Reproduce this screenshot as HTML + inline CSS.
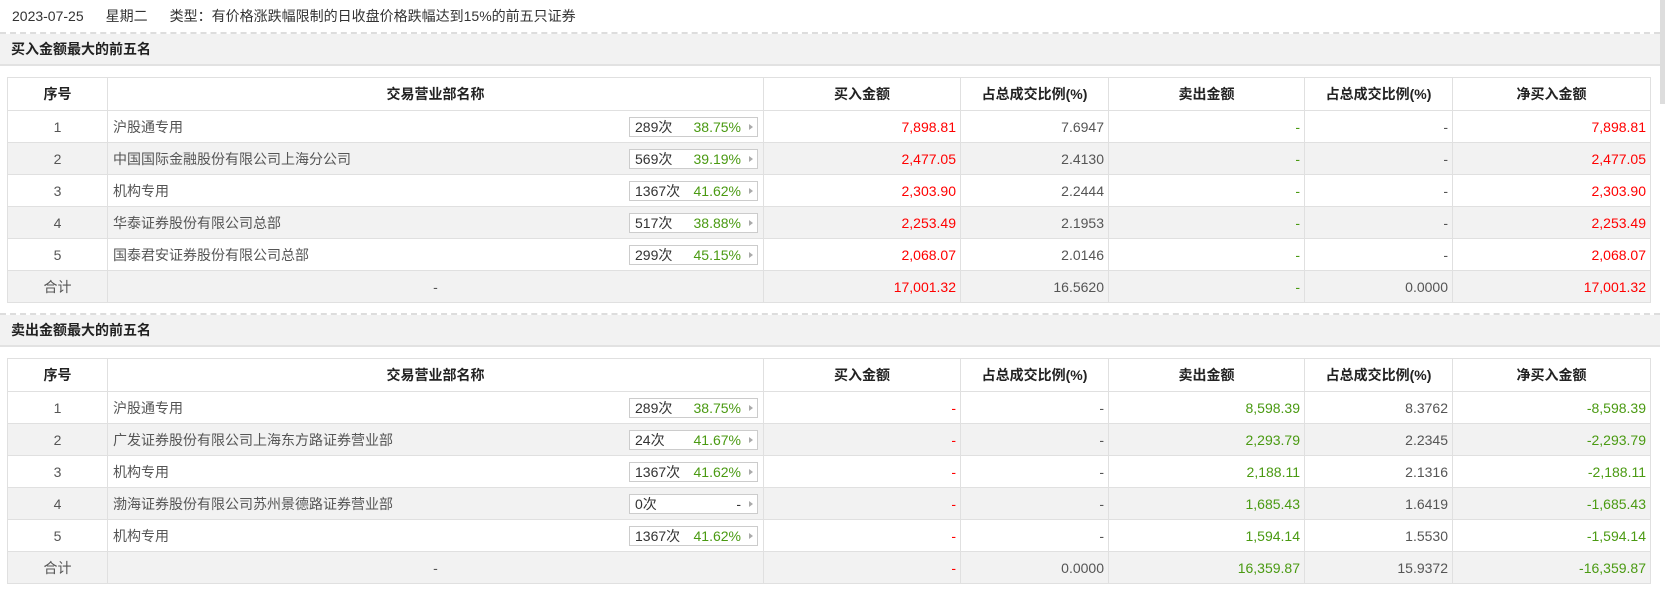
<!DOCTYPE html>
<html><head><meta charset="utf-8">
<style>
*{margin:0;padding:0;box-sizing:border-box}
body{width:1665px;height:594px;background:#fff;font-family:"Liberation Sans","Noto Sans CJK SC",sans-serif;font-size:14px;color:#333;overflow:hidden;position:relative}
.top{position:absolute;left:12px;top:7px;height:18px;line-height:18px;color:#333}
.top span{margin-right:22px}
.dash{position:absolute;left:0;width:1660px;border-top:2px dashed #ddd}
.sh{position:absolute;left:0;width:1660px;background:#f2f2f2;border-bottom:2px solid #e2e2e2;font-weight:bold;padding-left:11px;color:#222}
table{position:absolute;left:7px;border-collapse:collapse;table-layout:fixed;width:1643px}
td,th{border:1px solid #e0e0e0;height:32px;padding:0 5px;white-space:nowrap}
th{height:33px;font-weight:bold;color:#222;text-align:center;background:#fff}
tr.g td{background:#f2f2f2}
.c{text-align:center;color:#555}
.r{text-align:right;color:#555;padding-right:4px}
.red{color:#f00}
.grn{color:#4a9a12}
.nm{position:relative;color:#555}
.box{position:absolute;right:5px;top:6px;width:129px;height:20px;border:1px solid #ccc;background:#fff;line-height:18px;font-size:14px;color:#333;padding-left:5px}
.box b{font-weight:normal;position:absolute;right:16px;top:0;color:#4a9a12}
.box i{position:absolute;right:4px;top:6px;width:0;height:0;border-left:4px solid #aaa;border-top:3.5px solid transparent;border-bottom:3.5px solid transparent}
.sb{position:absolute;right:0;top:0;width:5px;height:104px;background:#ddd}
</style></head><body>
<div class="top"><span>2023-07-25</span><span>星期二</span>类型：有价格涨跌幅限制的日收盘价格跌幅达到15%的前五只证券</div>
<div class="dash" style="top:32px"></div>
<div class="sh" style="top:34px;height:32px;line-height:30px">买入金额最大的前五名</div>
<table style="top:77px">
<colgroup><col style="width:100px"><col style="width:656px"><col style="width:197px"><col style="width:148px"><col style="width:196px"><col style="width:148px"><col style="width:198px"></colgroup>
<tr><th>序号</th><th>交易营业部名称</th><th>买入金额</th><th>占总成交比例(%)</th><th>卖出金额</th><th>占总成交比例(%)</th><th>净买入金额</th></tr>
<tr><td class="c">1</td><td class="nm">沪股通专用<div class="box">289次<b>38.75%</b><i></i></div></td><td class="r red">7,898.81</td><td class="r">7.6947</td><td class="r grn">-</td><td class="r">-</td><td class="r red">7,898.81</td></tr>
<tr class="g"><td class="c">2</td><td class="nm">中国国际金融股份有限公司上海分公司<div class="box">569次<b>39.19%</b><i></i></div></td><td class="r red">2,477.05</td><td class="r">2.4130</td><td class="r grn">-</td><td class="r">-</td><td class="r red">2,477.05</td></tr>
<tr><td class="c">3</td><td class="nm">机构专用<div class="box">1367次<b>41.62%</b><i></i></div></td><td class="r red">2,303.90</td><td class="r">2.2444</td><td class="r grn">-</td><td class="r">-</td><td class="r red">2,303.90</td></tr>
<tr class="g"><td class="c">4</td><td class="nm">华泰证券股份有限公司总部<div class="box">517次<b>38.88%</b><i></i></div></td><td class="r red">2,253.49</td><td class="r">2.1953</td><td class="r grn">-</td><td class="r">-</td><td class="r red">2,253.49</td></tr>
<tr><td class="c">5</td><td class="nm">国泰君安证券股份有限公司总部<div class="box">299次<b>45.15%</b><i></i></div></td><td class="r red">2,068.07</td><td class="r">2.0146</td><td class="r grn">-</td><td class="r">-</td><td class="r red">2,068.07</td></tr>
<tr class="g"><td class="c">合计</td><td class="c">-</td><td class="r red">17,001.32</td><td class="r">16.5620</td><td class="r grn">-</td><td class="r">0.0000</td><td class="r red">17,001.32</td></tr>
</table>
<div class="dash" style="top:313px"></div>
<div class="sh" style="top:315px;height:32px;line-height:30px">卖出金额最大的前五名</div>
<table style="top:358px">
<colgroup><col style="width:100px"><col style="width:656px"><col style="width:197px"><col style="width:148px"><col style="width:196px"><col style="width:148px"><col style="width:198px"></colgroup>
<tr><th>序号</th><th>交易营业部名称</th><th>买入金额</th><th>占总成交比例(%)</th><th>卖出金额</th><th>占总成交比例(%)</th><th>净买入金额</th></tr>
<tr><td class="c">1</td><td class="nm">沪股通专用<div class="box">289次<b>38.75%</b><i></i></div></td><td class="r red">-</td><td class="r">-</td><td class="r grn">8,598.39</td><td class="r">8.3762</td><td class="r grn">-8,598.39</td></tr>
<tr class="g"><td class="c">2</td><td class="nm">广发证券股份有限公司上海东方路证券营业部<div class="box">24次<b>41.67%</b><i></i></div></td><td class="r red">-</td><td class="r">-</td><td class="r grn">2,293.79</td><td class="r">2.2345</td><td class="r grn">-2,293.79</td></tr>
<tr><td class="c">3</td><td class="nm">机构专用<div class="box">1367次<b>41.62%</b><i></i></div></td><td class="r red">-</td><td class="r">-</td><td class="r grn">2,188.11</td><td class="r">2.1316</td><td class="r grn">-2,188.11</td></tr>
<tr class="g"><td class="c">4</td><td class="nm">渤海证券股份有限公司苏州景德路证券营业部<div class="box">0次<b style="color:#333">-</b><i></i></div></td><td class="r red">-</td><td class="r">-</td><td class="r grn">1,685.43</td><td class="r">1.6419</td><td class="r grn">-1,685.43</td></tr>
<tr><td class="c">5</td><td class="nm">机构专用<div class="box">1367次<b>41.62%</b><i></i></div></td><td class="r red">-</td><td class="r">-</td><td class="r grn">1,594.14</td><td class="r">1.5530</td><td class="r grn">-1,594.14</td></tr>
<tr class="g"><td class="c">合计</td><td class="c">-</td><td class="r red">-</td><td class="r">0.0000</td><td class="r grn">16,359.87</td><td class="r">15.9372</td><td class="r grn">-16,359.87</td></tr>
</table>
<div class="sb"></div>
</body></html>
